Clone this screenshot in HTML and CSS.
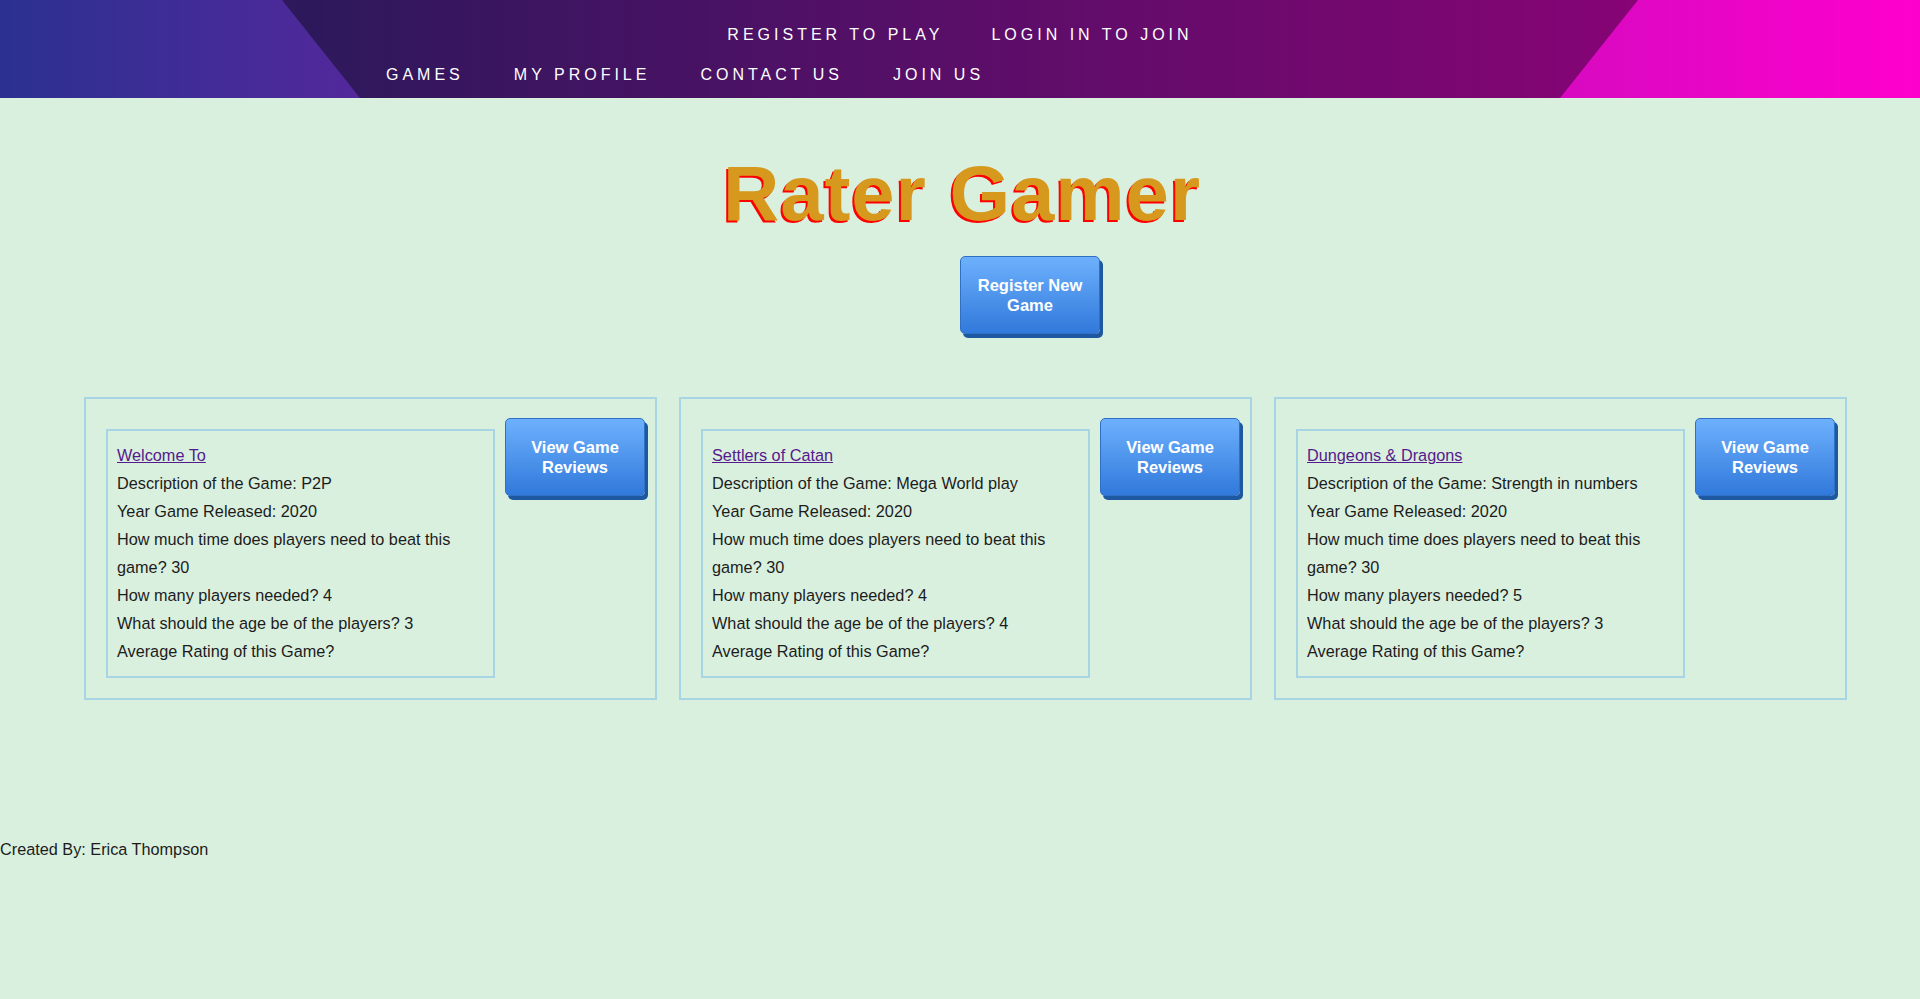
FILE: index.html
```html
<!DOCTYPE html>
<html lang="en">
<head>
<meta charset="utf-8">
<title>Rater Gamer</title>
<link rel="stylesheet" href="styles.css">
</head>
<body>
<header class="site-header">
  <nav class="nav">
    <ul class="nav-row nav-row-top">
      <li><a class="nav-link" href="#">Register to play</a></li>
      <li><a class="nav-link" href="#">Login in to join</a></li>
    </ul>
    <ul class="nav-row nav-row-bottom">
      <li><a class="nav-link" href="#">Games</a></li>
      <li><a class="nav-link" href="#">My Profile</a></li>
      <li><a class="nav-link" href="#">Contact Us</a></li>
      <li><a class="nav-link" href="#">Join Us</a></li>
    </ul>
  </nav>
</header>
<main class="main">
  <h1 class="title">Rater Gamer</h1>
  <div class="register-row">
    <button class="btn btn-register">Register New Game</button>
  </div>
  <section class="cards">
    <article class="card">
      <div class="game-info">
        <p><a class="game-link" href="#">Welcome To</a></p>
        <p>Description of the Game: P2P</p>
        <p>Year Game Released: 2020</p>
        <p>How much time does players need to beat this game? 30</p>
        <p>How many players needed? 4</p>
        <p>What should the age be of the players? 3</p>
        <p>Average Rating of this Game?</p>
      </div>
      <button class="btn">View Game Reviews</button>
    </article>
    <article class="card">
      <div class="game-info">
        <p><a class="game-link" href="#">Settlers of Catan</a></p>
        <p>Description of the Game: Mega World play</p>
        <p>Year Game Released: 2020</p>
        <p>How much time does players need to beat this game? 30</p>
        <p>How many players needed? 4</p>
        <p>What should the age be of the players? 4</p>
        <p>Average Rating of this Game?</p>
      </div>
      <button class="btn">View Game Reviews</button>
    </article>
    <article class="card">
      <div class="game-info">
        <p><a class="game-link" href="#">Dungeons &amp; Dragons</a></p>
        <p>Description of the Game: Strength in numbers</p>
        <p>Year Game Released: 2020</p>
        <p>How much time does players need to beat this game? 30</p>
        <p>How many players needed? 5</p>
        <p>What should the age be of the players? 3</p>
        <p>Average Rating of this Game?</p>
      </div>
      <button class="btn">View Game Reviews</button>
    </article>
  </section>
</main>
<footer class="footer">Created By: Erica Thompson</footer>
</body>
</html>
```

FILE: styles.css
```css
* {
  box-sizing: border-box;
}

body {
  margin: 0;
  background: #daf0df;
  color: #1c1c1c;
  font-family: "Liberation Sans", Arial, sans-serif;
  font-size: 16.25px;
}

.site-header {
  position: relative;
  height: 98px;
  padding-top: 25px;
  background: linear-gradient(90deg, #2b3190 0%, #ff00cc 100%);
  overflow: hidden;
}

.site-header::before {
  content: "";
  position: absolute;
  inset: 0;
  background: rgba(0, 0, 0, 0.4);
  clip-path: polygon(282px 0, 1638px 0, 1560px 100%, 360px 100%);
}

.nav {
  position: relative;
  display: flex;
  flex-direction: column;
  gap: 20px;
}

.nav-row {
  list-style: none;
  margin: 0;
  padding: 0;
  display: flex;
  font-size: 16px;
  line-height: 20px;
}

.nav-row-top {
  justify-content: center;
  gap: 48px;
}

.nav-row-bottom {
  gap: 50px;
  padding-left: 386px;
}

.nav-link {
  color: #ffffff;
  text-decoration: none;
  text-transform: uppercase;
  letter-spacing: 4px;
}

.title {
  margin: 56px 0 0;
  padding-left: 4px;
  text-align: center;
  font-size: 78px;
  line-height: 78px;
  font-weight: bold;
  letter-spacing: 0.9px;
  color: #d6991e;
  text-shadow: -2px 2px 0 #ff0000;
}

.register-row {
  display: grid;
  grid-template-columns: 1fr 1fr;
  margin-top: 24px;
}

.btn-register {
  grid-column: 2;
  justify-self: start;
}

.btn {
  width: 140px;
  padding: 18px 12px;
  font-family: "Liberation Sans", Arial, sans-serif;
  font-size: 16.5px;
  font-weight: bold;
  line-height: 20px;
  color: #ffffff;
  text-align: center;
  background: linear-gradient(180deg, #6db1fd 0%, #3179db 100%);
  border: 1px solid #2f6fc4;
  border-radius: 5px;
  box-shadow: 3px 4px 0 #1d58a0;
  cursor: pointer;
}

.cards {
  display: flex;
  gap: 22px;
  padding-left: 84px;
  margin-top: 63px;
}

.card {
  width: 573px;
  display: flex;
  align-items: flex-start;
  gap: 10px;
  padding: 19px 10px 20px 20px;
  border: 2px solid #a8d5e4;
}

.game-info {
  width: 389px;
  flex: none;
  margin-top: 11px;
  padding: 10px 9px 11px;
  border: 2px solid #a8d5e4;
  line-height: 28px;
}

.game-info p {
  margin: 0;
}

.game-link {
  color: #551a8b;
}

.footer {
  margin-top: 139px;
  line-height: 20px;
}
```
